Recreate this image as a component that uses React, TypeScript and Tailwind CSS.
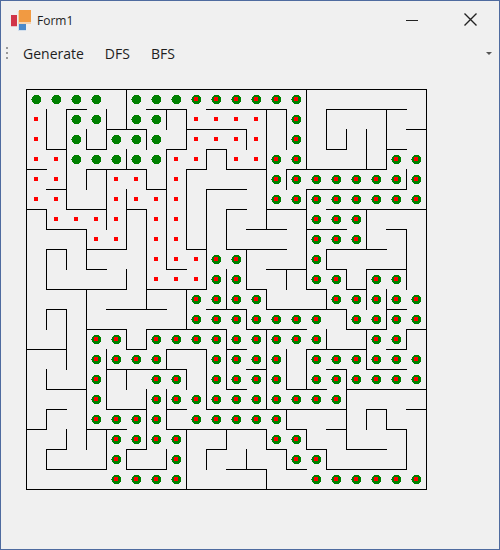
const CELL = 20;
const SIZE = 20;

type Span = [from: number, to: number];

// Index = horizontal grid line from the top, spans in cells from the left.
const horizontalWalls: Span[][] = [
  [[0, 20]],
  [[2, 3], [6, 8], [9, 13], [15, 19]],
  [[4, 6], [8, 11], [19, 20]],
  [[1, 2], [3, 4], [7, 8], [9, 10], [15, 16], [18, 19]],
  [[0, 1], [3, 6], [8, 9], [10, 12], [13, 18]],
  [[1, 2], [6, 7], [9, 11], [14, 19]],
  [[0, 1], [2, 4], [5, 6], [10, 11], [12, 14], [15, 20]],
  [[1, 3], [11, 13], [14, 16], [18, 19]],
  [[1, 2], [3, 5], [8, 9], [10, 13], [15, 18]],
  [[3, 4], [7, 8], [12, 14], [15, 16], [17, 19]],
  [[1, 5], [6, 9], [11, 12], [14, 15], [16, 17]],
  [[1, 2], [4, 7], [9, 11], [12, 16], [18, 19]],
  [[3, 5], [6, 10], [11, 14], [16, 18], [19, 20]],
  [[0, 2], [5, 6], [7, 9], [10, 11], [14, 17], [18, 19]],
  [[4, 8], [11, 12], [15, 16], [17, 19]],
  [[1, 3], [10, 11], [13, 15], [16, 20]],
  [[1, 2], [4, 6], [7, 8], [9, 16], [17, 18], [19, 20]],
  [[0, 1], [3, 5], [7, 12], [13, 14], [15, 16], [18, 19]],
  [[1, 2], [5, 6], [9, 10], [12, 13], [14, 15], [16, 18]],
  [[1, 4], [5, 7], [10, 12], [13, 14], [15, 19]],
  [[0, 20]],
];

// Index = vertical grid line from the left, spans in cells from the top.
const verticalWalls: Span[][] = [
  [[0, 20]],
  [[1, 3], [6, 7], [8, 10], [11, 12], [14, 15], [16, 17], [18, 19]],
  [[1, 6], [8, 9], [11, 14], [17, 18]],
  [[2, 3], [4, 5], [7, 9], [10, 18]],
  [[1, 3], [4, 7], [13, 16], [17, 19]],
  [[0, 2], [3, 4], [5, 8], [9, 10], [12, 13], [14, 15], [18, 19]],
  [[2, 3], [4, 5], [6, 11], [12, 13], [15, 18]],
  [[1, 2], [3, 9], [13, 14], [15, 17], [18, 19]],
  [[1, 3], [4, 8], [10, 12], [14, 15], [17, 20]],
  [[3, 4], [5, 10], [13, 16], [18, 19]],
  [[3, 4], [6, 8], [9, 11], [12, 15], [17, 18]],
  [[2, 3], [8, 10], [11, 12], [18, 19]],
  [[1, 7], [10, 11], [12, 16], [17, 18], [19, 20]],
  [[1, 3], [4, 5], [9, 10], [13, 15], [16, 17], [18, 19]],
  [[0, 4], [5, 10], [13, 15], [17, 18]],
  [[1, 3], [8, 9], [10, 11], [12, 13], [18, 19]],
  [[2, 3], [9, 10], [11, 12], [14, 18]],
  [[2, 4], [6, 8], [9, 11], [12, 14], [16, 17]],
  [[1, 4], [10, 12], [16, 17]],
  [[4, 5], [7, 10], [12, 13], [17, 19]],
  [[0, 20]],
];

// G = green trail, R = red trail, B = both, . = unvisited.
const trail = [
  "GGGG.GGGBBBBBB......",
  "R.GG.GG.RRRR.B......",
  "R.G.GGG.RRRR.B......",
  "RRGGGGGRR.RRBB....BB",
  "RR..RR.R....BBBBBBBB",
  "RR..RRRR....BBBBBBBB",
  ".RRRR.RR......BBB...",
  "...RR.RR......BBB...",
  "......RRRBB...B.....",
  "......RRRBB...BB.BB.",
  "........BBBB...BBBBB",
  "........BBBBBBB.BBBB",
  "...BB.BBBBBBBBB..BB.",
  "...BBBB..BBBB.BBBBBB",
  "...B..BB.BBBB.BBBBBB",
  "...B..BBBBBBBBBB....",
  "...BBBB.BBBBB.......",
  "....BBBB....BB......",
  "....B..B.....BB.....",
  "....BBBB......BBBBBB",
];

const wallPath = [
  ...horizontalWalls.flatMap((spans, y) =>
    spans.map(([a, b]) => `M${a * CELL} ${y * CELL}H${b * CELL}`),
  ),
  ...verticalWalls.flatMap((spans, x) =>
    spans.map(([a, b]) => `M${x * CELL} ${a * CELL}V${b * CELL}`),
  ),
].join("");

function Dot({ kind, x, y }: { kind: string; x: number; y: number }) {
  return (
    <g transform={`translate(${x * CELL} ${y * CELL})`}>
      {kind !== "R" && (
        <path
          fill="#008000"
          d="M8 6h5v1h1v1h1v5h-1v1h-1v1h-5v-1h-1v-1h-1v-2h-1v-1h1v-2h1v-1h1z"
        />
      )}
      {kind !== "G" && <rect x="8" y="8" width="4" height="4" fill="#ff0000" />}
    </g>
  );
}

function Maze() {
  const side = CELL * SIZE + 1;
  return (
    <svg
      width={side}
      height={side}
      viewBox={`0 0 ${side} ${side}`}
      shapeRendering="crispEdges"
      role="img"
      aria-label="Maze"
      className="block shrink-0"
    >
      <path
        d={wallPath}
        transform="translate(0.5 0.5)"
        stroke="#000"
        strokeLinecap="square"
        fill="none"
      />
      {trail.flatMap((row, y) =>
        [...row].map((kind, x) =>
          kind === "." ? null : <Dot key={`${x}-${y}`} kind={kind} x={x} y={y} />,
        ),
      )}
    </svg>
  );
}

function AppIcon() {
  return (
    <svg width="22" height="22" viewBox="0 0 22 22" aria-hidden="true" className="block">
      <rect x="1" y="16" width="6" height="1" fill="#e9c3c7" />
      <rect x="8" y="1" width="13" height="13" fill="#f6d3ae" />
      <rect x="8" y="14" width="8" height="7" fill="#d3dfec" />
      <rect x="1" y="5" width="6" height="11" fill="#d13448" />
      <rect x="9" y="0" width="12" height="12" fill="#f19a42" />
      <rect x="9" y="14" width="7" height="6" fill="#4a8acb" />
    </svg>
  );
}

function TitleBar() {
  return (
    <header className="flex h-10 items-center pl-[9px]">
      <AppIcon />
      <h1 className="ml-[5px] flex-1 text-xs">Form1</h1>
      <div className="flex h-[38px] self-start">
        <button type="button" aria-label="Minimize" className="flex w-[58px] items-center justify-center">
          <svg width="12" height="12" viewBox="0 0 12 12" shapeRendering="crispEdges">
            <rect y="6" width="12" height="1" fill="#222" />
          </svg>
        </button>
        <button type="button" aria-label="Close" className="flex w-[58px] items-center justify-center">
          <svg width="14" height="14" viewBox="0 0 14 14">
            <path d="M1.5 0.5L13.5 12.5M13.5 0.5L1.5 12.5" stroke="#222" strokeWidth="1.4" />
          </svg>
        </button>
      </div>
    </header>
  );
}

function ToolBar() {
  return (
    <nav className="flex h-6 items-center pr-[3px] pl-[5px] text-sm">
      <svg width="2" height="12" viewBox="0 0 2 12" aria-hidden="true" className="mr-[15px]">
        <path d="M0 0h2v2h-2zM0 5h2v2h-2zM0 10h2v2h-2z" fill="#999" />
      </svg>
      <div className="flex flex-1 gap-[21px] pt-0.5">
        <button type="button">Generate</button>
        <button type="button">DFS</button>
        <button type="button">BFS</button>
      </div>
      <button type="button" aria-label="Toolbar options" className="p-1">
        <svg width="6" height="3" viewBox="0 0 6 3">
          <path d="M0 0H6L3 3Z" fill="#555" />
        </svg>
      </button>
    </nav>
  );
}

export default function App() {
  return (
    <div className="flex min-h-screen flex-col border border-[#4f6b9f] bg-[#f0f0f0] font-['Open_Sans','Noto_Sans',sans-serif] text-[#1e1e1e]">
      <TitleBar />
      <ToolBar />
      <main className="px-[25px] pt-6">
        <Maze />
      </main>
    </div>
  );
}
